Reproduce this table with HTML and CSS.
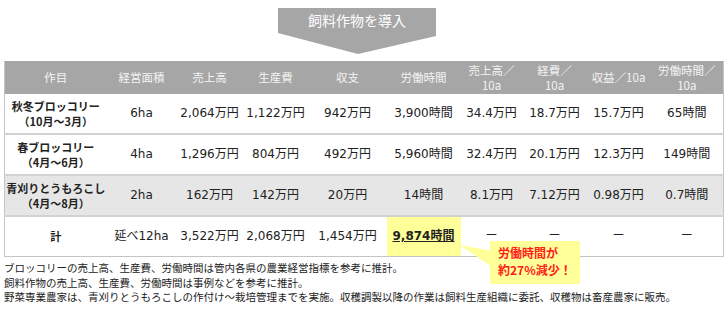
FILE: index.html
```html
<!DOCTYPE html>
<html lang="ja">
<head>
  <meta charset="UTF-8" />
  <title>飼料作物を導入</title>
  <meta name="viewport" content="width=device-width, initial-scale=1.0" />
  <link rel="stylesheet" href="styles.css">
</head>
<body>

  <div class="banner">飼料作物を導入</div>

  <div class="wrap">
    <table class="matrix">
      <colgroup>
        <col style="width:102px">
        <col style="width:70px">
        <col style="width:66px">
        <col style="width:66px">
        <col style="width:78px">
        <col style="width:74px">
        <col style="width:62px">
        <col style="width:64px">
        <col style="width:64px">
        <col style="width:73px">
      </colgroup>
      <thead>
        <tr>
          <th>作目</th>
          <th>経営面積</th>
          <th>売上高</th>
          <th>生産費</th>
          <th>収支</th>
          <th>労働時間</th>
          <th>売上高／<br>10a</th>
          <th>経費／<br>10a</th>
          <th>収益／10a</th>
          <th>労働時間／<br>10a</th>
        </tr>
      </thead>
      <tbody>
        <tr>
          <td class="crop">秋冬ブロッコリー<br>（10月～3月）</td>
          <td>6ha</td>
          <td>2,064万円</td>
          <td>1,122万円</td>
          <td>942万円</td>
          <td>3,900時間</td>
          <td>34.4万円</td>
          <td>18.7万円</td>
          <td>15.7万円</td>
          <td>65時間</td>
        </tr>
        <tr>
          <td class="crop">春ブロッコリー<br>（4月～6月）</td>
          <td>4ha</td>
          <td>1,296万円</td>
          <td>804万円</td>
          <td>492万円</td>
          <td>5,960時間</td>
          <td>32.4万円</td>
          <td>20.1万円</td>
          <td>12.3万円</td>
          <td>149時間</td>
        </tr>
        <tr class="feed">
          <td class="crop">青刈りとうもろこし<br>（4月～8月）</td>
          <td>2ha</td>
          <td>162万円</td>
          <td>142万円</td>
          <td>20万円</td>
          <td>14時間</td>
          <td>8.1万円</td>
          <td>7.12万円</td>
          <td>0.98万円</td>
          <td>0.7時間</td>
        </tr>
        <tr class="total">
          <td class="crop">計</td>
          <td>延べ12ha</td>
          <td>3,522万円</td>
          <td>2,068万円</td>
          <td>1,454万円</td>
          <td class="hit"><span>9,874時間</span></td>
          <td>ー</td>
          <td>ー</td>
          <td>ー</td>
          <td>ー</td>
        </tr>
      </tbody>
    </table>

    <svg class="tail" width="34" height="24" viewBox="0 0 34 24">
      <polygon points="0,0 32,6 32,22" fill="#ffff99" />
    </svg>
    <div class="callout">労働時間が<br>約27%減少！</div>
  </div>

  <div class="notes">
    <p>ブロッコリーの売上高、生産費、労働時間は管内各県の農業経営指標を参考に推計。</p>
    <p>飼料作物の売上高、生産費、労働時間は事例などを参考に推計。</p>
    <p>野菜専業農家は、青刈りとうもろこしの作付け～栽培管理までを実施。収穫調製以降の作業は飼料生産組織に委託、収穫物は畜産農家に販売。</p>
  </div>

</body>
</html>
```

FILE: styles.css
```css
body {
  font-family: "Noto Sans CJK JP", "Noto Sans", sans-serif;
  background: #ffffff;
  color: #222;
  margin: 0;
}

.banner {
  margin: 8px 0 0 278px;
  width: 158px;
  height: 46px;
  background: #a6a6a6;
  color: #ffffff;
  font-size: 14px;
  line-height: 25px;
  text-align: center;
  clip-path: polygon(0 0, 100% 0, 100% 28px, 80px 100%, 0 25px);
}

.wrap {
  position: relative;
  margin: 7px 0 0 4px;
  width: 719px;
}

.matrix {
  width: 719px;
  table-layout: fixed;
  border-collapse: collapse;
  border: 1px solid #c4c4c4;
  border-top: none;
}
.matrix th {
  background: #a6a6a6;
  color: #f4f4f4;
  font-weight: normal;
  font-size: 11.5px;
  line-height: 15px;
  height: 33px;
  padding: 0;
  text-align: center;
}
.matrix td {
  font-family: "DejaVu Sans", "Noto Sans CJK JP", sans-serif;
  font-size: 12px;
  line-height: 15px;
  height: 39px;
  padding: 0;
  text-align: center;
  border-top: 2px solid #d2d2d2;
  white-space: nowrap;
}
.matrix tbody tr:first-child td { border-top: none; }
.matrix td.crop {
  font-family: "Noto Sans CJK JP", sans-serif;
  font-size: 11px;
  font-weight: bold;
  line-height: 15px;
}
.matrix tr.feed td { background: #e6e6e6; }

.matrix td.hit {
  background: #ffff99;
  font-weight: bold;
}
.matrix td.hit span {
  text-decoration: underline;
}

.tail {
  position: absolute;
  left: 456px;
  top: 184px;
}
.callout {
  position: absolute;
  left: 486px;
  top: 180px;
  height: 37px;
  padding: 3px 8px;
  background: #ffff99;
  color: #ff1a1a;
  font-size: 12px;
  font-weight: bold;
  line-height: 17px;
  white-space: nowrap;
}

.notes {
  margin: 4px 0 0 4px;
  font-size: 10.5px;
  line-height: 14.5px;
}
.notes p { margin: 0; }
```
